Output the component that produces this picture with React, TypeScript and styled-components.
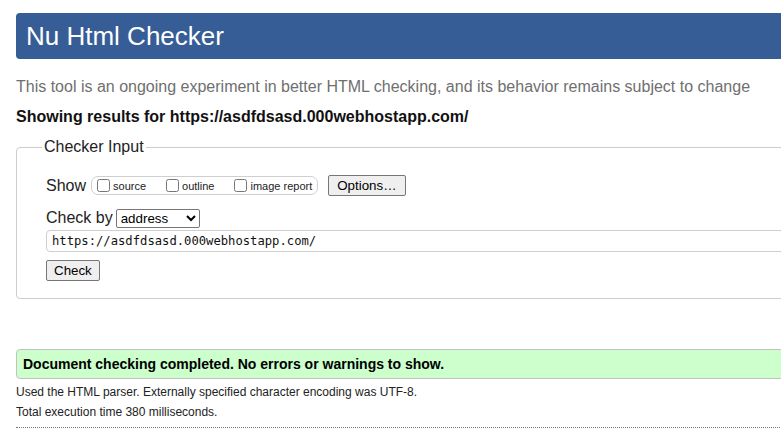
import styled, { createGlobalStyle } from "styled-components";

const GlobalStyle = createGlobalStyle`
  html, body {
    margin: 0;
    padding: 0;
    overflow: hidden;
    background: #fff;
  }
  body {
    font-family: "Liberation Sans", Arial, sans-serif;
    color: #000;
  }
`;

const showOptions = ["source", "outline", "image report"];

const App = () => {
  return (
    <>
      <GlobalStyle />
      <Page>
        <Banner>Nu Html Checker</Banner>
        <About>
          This tool is an ongoing experiment in better HTML checking, and its
          behavior remains subject to change
        </About>
        <ResultsFor>
          Showing results for https://asdfdsasd.000webhostapp.com/
        </ResultsFor>

        <InputFieldset>
          <Legend>Checker Input</Legend>
          <Row height={21}>
            <RowLabel>Show</RowLabel>
            <OptionGroup>
              {showOptions.map((name) => (
                <OptionLabel key={name}>
                  <Checkbox type="checkbox" />
                  {name}
                </OptionLabel>
              ))}
            </OptionGroup>
            <OptionsButton>Options…</OptionsButton>
          </Row>
          <Row height={20} gapTop={12}>
            <RowLabel>Check by</RowLabel>
            <Select defaultValue="address">
              <option value="address">address</option>
              <option value="file">file upload</option>
              <option value="text">text input</option>
            </Select>
          </Row>
          <UrlInput
            type="text"
            defaultValue="https://asdfdsasd.000webhostapp.com/"
          />
          <SubmitRow>
            <Button>Check</Button>
          </SubmitRow>
        </InputFieldset>

        <Success>Document checking completed. No errors or warnings to show.</Success>
        <Details>
          <DetailLine>
            Used the HTML parser. Externally specified character encoding was
            UTF-8.
          </DetailLine>
          <DetailLine>Total execution time 380 milliseconds.</DetailLine>
        </Details>
        <Divider />
      </Page>
    </>
  );
};
export default App;

const Page = styled.div`
  width: 1100px;
  padding: 13px 0 0 16px;
`;

const Banner = styled.h1`
  margin: 0;
  height: 46px;
  padding: 0 10px;
  border-radius: 4px;
  background: #365d95;
  color: #fff;
  font-size: 26px;
  font-weight: 400;
  line-height: 46px;
`;

const About = styled.p`
  margin: 18px 0 0;
  color: #6f6f6f;
  font-size: 16px;
  line-height: 20px;
`;

const ResultsFor = styled.p`
  margin: 10px 0 0;
  color: #111;
  font-size: 16px;
  font-weight: 700;
  line-height: 20px;
`;

const InputFieldset = styled.fieldset`
  margin: 11px 0 0;
  padding: 19px 0 17px 29px;
  border: 1px solid #cdcdcd;
  border-radius: 4px;
  display: flex;
  flex-direction: column;
  align-items: flex-start;
`;

const Legend = styled.legend`
  margin-left: -4px;
  padding: 0 2px;
  font-size: 16px;
  line-height: 18px;
  color: #222;
`;

const Row = styled.div<{ height: number; gapTop?: number }>`
  display: flex;
  align-items: center;
  height: ${({ height }) => height}px;
  margin-top: ${({ gapTop }) => gapTop || 0}px;
`;

const RowLabel = styled.span`
  font-size: 16px;
  line-height: 18px;
  color: #222;
`;

const OptionGroup = styled.span`
  display: flex;
  align-items: center;
  box-sizing: border-box;
  height: 19px;
  margin-left: 5px;
  padding: 0 5px;
  border: 1px solid #cfcfcf;
  border-radius: 7px;
`;

const OptionLabel = styled.label`
  display: flex;
  align-items: center;
  font-size: 11px;
  color: #222;
  & + & {
    margin-left: 20px;
  }
`;

const Checkbox = styled.input`
  width: 13px;
  height: 13px;
  margin: 0 3px 0 0;
`;

const Button = styled.button`
  box-sizing: border-box;
  height: 21px;
  padding: 1px 7px;
  border: 1px solid #767676;
  border-radius: 2px;
  background: #efefef;
  color: #000;
  font-family: "Liberation Sans", Arial, sans-serif;
  font-size: 13.33px;
  line-height: 15px;
`;

const OptionsButton = styled(Button)`
  margin-left: 10px;
  padding: 1px 8px;
`;

const Select = styled.select`
  box-sizing: border-box;
  width: 84px;
  height: 19px;
  margin-left: 3px;
  border: 1px solid #767676;
  border-radius: 2px;
  background: #fff;
  color: #000;
  font-family: "Liberation Sans", Arial, sans-serif;
  font-size: 13.33px;
`;

const UrlInput = styled.input`
  box-sizing: border-box;
  width: 100%;
  height: 22px;
  margin-top: 2px;
  padding: 0 5px;
  border: 1px solid #cfcfcf;
  border-radius: 4px;
  color: #111;
  font-family: "DejaVu Sans Mono", "Liberation Mono", monospace;
  font-size: 12.2px;
  outline: none;
`;

const SubmitRow = styled.div`
  display: flex;
  margin-top: 8px;
`;

const Success = styled.div`
  display: flex;
  align-items: center;
  box-sizing: border-box;
  height: 30px;
  margin-top: 50px;
  padding: 0 6px;
  border: 1px solid #c2c2c2;
  border-radius: 4px;
  background: #ccffcc;
  color: #000;
  font-size: 14px;
  font-weight: 700;
`;

const Details = styled.div`
  margin-top: 3px;
`;

const DetailLine = styled.p`
  margin: 0;
  color: #222;
  font-size: 12px;
  line-height: 20px;
`;

const Divider = styled.div`
  margin-top: 5px;
  border-top: 1px dotted #777;
`;
